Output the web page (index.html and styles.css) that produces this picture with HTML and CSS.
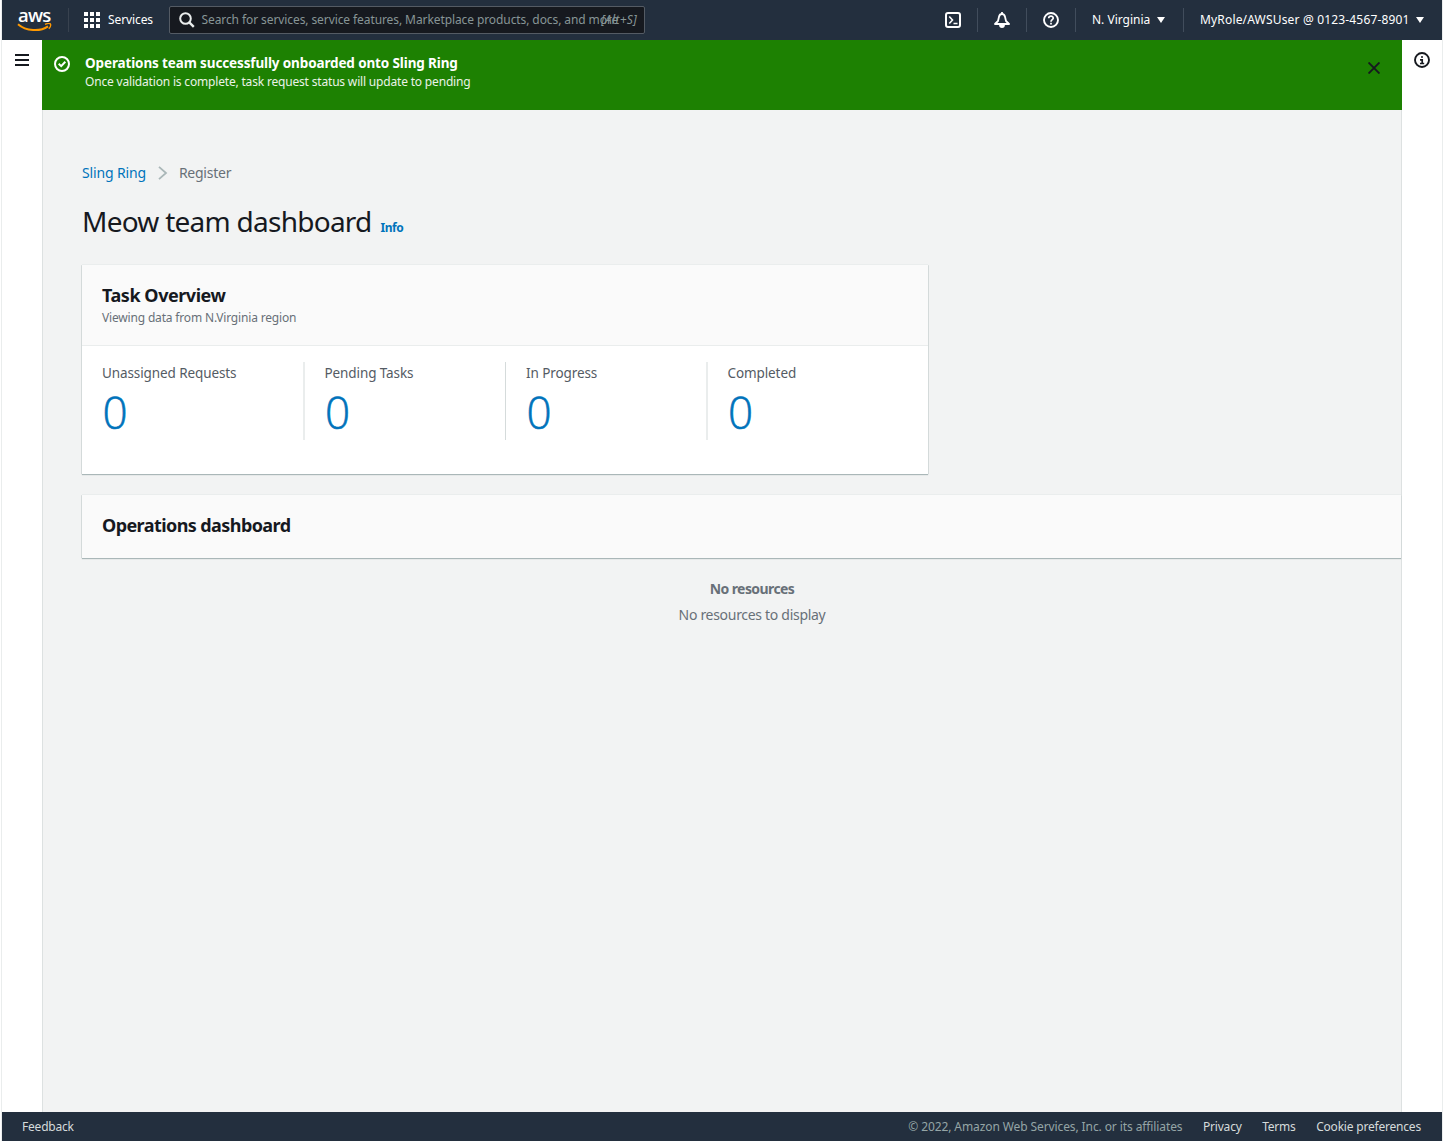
FILE: index.html
```html
<!DOCTYPE html>
<html lang="en">
<head>
    <meta charset="UTF-8">
    <meta name="viewport" content="width=device-width, initial-scale=1.0">
    <title>Meow team dashboard</title>
    <link rel="stylesheet" href="styles.css">
</head>
<body>
    <div class="app">
        <!-- Top navigation -->
        <nav class="topnav">
            <a class="logo" href="#">
                <span class="logo-text">aws</span>
                <svg class="logo-smile" width="36" height="10" viewBox="0 0 36 10">
                    <path d="M1 1.200C9 8.200 23 9 31 3.400" fill="none" stroke="#f90" stroke-width="2"/>
                    <path d="M28 1.300C30.500 .4 33 .4 33.400 1C33.900 1.800 33.200 4.200 31.800 5.800" fill="none" stroke="#f90" stroke-width="1.400"/>
                </svg>
            </a>
            <div class="services">
                <svg width="16" height="16" viewBox="0 0 16 16" fill="#fff">
                    <path d="M0 0h4v4H0zM6 0h4v4H6zM12 0h4v4h-4zM0 6h4v4H0zM6 6h4v4H6zM12 6h4v4h-4zM0 12h4v4H0zM6 12h4v4H6zM12 12h4v4h-4z"/>
                </svg>
                <span>Services</span>
            </div>
            <div class="search">
                <svg width="16" height="16" viewBox="0 0 16 16" fill="none" stroke="#eaeded" stroke-width="2">
                    <circle cx="6.500" cy="6.500" r="5.300"/>
                    <path d="M10.300 10.300L14.800 14.800" stroke-width="2.400"/>
                </svg>
                <span class="search-text">Search for services, service features, Marketplace products, docs, and more</span>
                <span class="search-key">[Alt+S]</span>
            </div>
            <div class="nav-right">
                <div class="nav-icon">
                    <svg width="16" height="16" viewBox="0 0 16 16" fill="none" stroke="#fff" stroke-width="2">
                        <rect x="1" y="1" width="14" height="14" rx="2"/>
                        <path d="M4.300 4.500L7.500 8L4.300 11.500M8.500 11.500h4" stroke-width="1.600"/>
                    </svg>
                </div>
                <div class="nav-icon">
                    <svg width="16" height="16" viewBox="0 0 16 16" fill="none" stroke="#fff" stroke-width="1.800" stroke-linejoin="round">
                        <path d="M1 12L4 9L5 4.800C5.400 3 6.500 2 8 2S10.600 3 11 4.800L12 9l3 3z"/>
                        <path d="M6 13a2 2 0 0 0 4 0" fill="#fff"/>
                        <path d="M8 0v2"/>
                    </svg>
                </div>
                <div class="nav-icon">
                    <svg width="16" height="16" viewBox="0 0 16 16" fill="none" stroke="#fff" stroke-width="1.900">
                        <circle cx="8" cy="8" r="7"/>
                        <path d="M5.700 6.300C5.800 3.200 10.300 3.400 10.200 6.100C10.100 7.700 8 7.600 8 9.700M8 10.800v1.800" stroke-width="1.700"/>
                    </svg>
                </div>
                <div class="nav-region"><span>N. Virginia</span> <i class="caret"></i></div>
                <div class="nav-user"><span>MyRole/AWSUser @ 0123-4567-8901</span> <i class="caret"></i></div>
            </div>
        </nav>

        <div class="layout">
            <aside class="rail">
                <svg width="14" height="12" viewBox="0 0 14 12" fill="#16191f">
                    <path d="M0 0h14v2H0zM0 5h14v2H0zM0 10h14v2H0z"/>
                </svg>
            </aside>

            <main class="content">
                <!-- Success message -->
                <div class="flash">
                    <svg class="flash-icon" width="16" height="16" viewBox="0 0 16 16" fill="none" stroke="#fff" stroke-width="2">
                        <circle cx="8" cy="8" r="7"/>
                        <path d="M4.700 7.800L7.200 10.200L11.300 5.800"/>
                    </svg>
                    <div class="flash-body">
                        <div class="flash-title">Operations team successfully onboarded onto Sling Ring</div>
                        <div class="flash-text">Once validation is complete, task request status will update to pending</div>
                    </div>
                    <svg class="flash-close" width="12" height="12" viewBox="0 0 12 12" fill="none" stroke="#16191f" stroke-width="1.900">
                        <path d="M.5 .5L11.500 11.500M11.500 .5L.5 11.500"/>
                    </svg>
                </div>

                <div class="page">
                    <div class="breadcrumbs">
                        <a class="crumb-link" href="#">Sling Ring</a>
                        <svg width="10" height="14" viewBox="0 0 10 14" fill="none" stroke="#aab7b8" stroke-width="1.800">
                            <path d="M1 .8L8 7L1 13.200"/>
                        </svg>
                        <span class="crumb-current">Register</span>
                    </div>

                    <div class="page-header">
                        <h1>Meow team dashboard</h1>
                        <a class="info" href="#">Info</a>
                    </div>

                    <!-- Task overview -->
                    <section class="card overview">
                        <div class="card-header">
                            <h2 class="overview-title">Task Overview</h2>
                            <p>Viewing data from N.Virginia region</p>
                        </div>
                        <div class="stats">
                            <div class="stat">
                                <div class="stat-label">Unassigned Requests</div>
                                <a class="stat-value" href="#">0</a>
                            </div>
                            <div class="stat">
                                <div class="stat-label">Pending Tasks</div>
                                <a class="stat-value" href="#">0</a>
                            </div>
                            <div class="stat">
                                <div class="stat-label">In Progress</div>
                                <a class="stat-value" href="#">0</a>
                            </div>
                            <div class="stat">
                                <div class="stat-label">Completed</div>
                                <a class="stat-value" href="#">0</a>
                            </div>
                        </div>
                    </section>

                    <!-- Operations dashboard -->
                    <section class="card operations">
                        <h2>Operations dashboard</h2>
                    </section>
                    <div class="empty">
                        <b>No resources</b>
                        <span>No resources to display</span>
                    </div>
                </div>
            </main>

            <aside class="rail rail-right">
                <svg width="16" height="16" viewBox="0 0 16 16" fill="none" stroke="#16191f" stroke-width="1.900">
                    <circle cx="8" cy="8" r="7"/>
                    <path d="M7 5h2M6 7.800h2.200v3.200M6 11.500h4.200" stroke-width="1.700"/>
                </svg>
            </aside>
        </div>

        <footer>
            <a class="feedback" href="#">Feedback</a>
            <span class="copyright">© 2022, Amazon Web Services, Inc. or its affiliates</span>
            <a href="#">Privacy</a>
            <a href="#">Terms</a>
            <a href="#">Cookie preferences</a>
        </footer>
    </div>
</body>
</html>
```
FILE: styles.css
```css
* {
    box-sizing: border-box;
}

body {
    margin: 0;
    padding: 0 1px;
    background: white;
    font-family: "Noto Sans", "Open Sans", sans-serif;
    font-size: 13px;
    color: #16191f;
}

a {
    text-decoration: none;
    color: #0073bb;
}

h1, h2, p {
    margin: 0;
}

svg {
    display: block;
    flex: none;
}

.app {
    display: flex;
    flex-direction: column;
    height: 1141px;
    padding: 0 1px;
    overflow: hidden;
    white-space: nowrap;
    box-shadow: inset 1px 0 #eaeded, inset -1px 0 #eaeded;
}

/* Top navigation */
.topnav {
    display: flex;
    align-items: center;
    height: 40px;
    flex: none;
    background: #232f3e;
    color: white;
    font-size: 12px;
}

.topnav span {
    padding-bottom: 1px;
}

.logo {
    width: 67px;
    height: 24px;
    padding-left: 15px;
    border-right: 1px solid #38424f;
    color: white;
}

.logo-text {
    display: block;
    height: 14px;
    margin-left: 1px;
    line-height: 13px;
    font-family: "Open Sans", sans-serif;
    font-size: 18.500px;
    font-weight: 600;
    letter-spacing: -0.8px;
}

.logo-smile {
    margin-top: 1px;
}

.services {
    display: flex;
    align-items: center;
    width: 100px;
    padding-left: 15px;
    gap: 8px;
    letter-spacing: -0.1px;
}

.search {
    display: flex;
    align-items: center;
    position: relative;
    width: 476px;
    height: 28px;
    padding-left: 9px;
    gap: 6.500px;
    background: #16191f;
    border: 1px solid #545b64;
    border-radius: 2px;
    color: #879596;
}

.search-text {
    letter-spacing: -0.09px;
}

.search-key {
    position: absolute;
    right: 7px;
    font-style: italic;
    letter-spacing: 0.3px;
}

.nav-right {
    display: flex;
    align-items: center;
    margin-left: auto;
}

.nav-icon {
    display: flex;
    align-items: center;
    width: 49px;
    height: 24px;
    padding-left: 16px;
    border-right: 1px solid #414d5c;
}

.nav-region,
.nav-user {
    display: flex;
    align-items: center;
    justify-content: space-between;
    height: 24px;
}

.nav-region {
    width: 108px;
    padding: 0 18px 0 16px;
    border-right: 1px solid #414d5c;
}

.nav-user {
    width: 258px;
    padding: 0 18px 0 16px;
    letter-spacing: 0.17px;
}

.caret {
    border: 4px solid transparent;
    border-top: 6px solid white;
    border-bottom: 0;
}

/* Page layout */
.layout {
    display: flex;
    flex: 1;
    min-height: 0;
}

.rail {
    width: 40px;
    flex: none;
    padding: 14px 0 0 13px;
}

.rail-right {
    padding: 12px 0 0 12px;
}

.content {
    flex: 1;
    min-width: 0;
    overflow: hidden;
    background: #f2f3f3;
    box-shadow: inset 1px 0 #dde1e1, inset -1px 0 #dde1e1;
}

.flash {
    display: flex;
    height: 70px;
    padding: 16px 22px 0 12px;
    background: #1d8102;
    color: white;
}

.flash-body {
    margin: -2px auto 0 15px;
}

.flash-title {
    font-size: 13.500px;
    font-weight: bold;
    line-height: 18px;
    letter-spacing: -0.13px;
}

.flash-text {
    font-size: 12px;
    line-height: 20px;
    letter-spacing: -0.18px;
    color: #eaf3e8;
}

.flash-close {
    margin-top: 6px;
}

.page {
    padding: 52px 0 0 40px;
}

.breadcrumbs {
    display: flex;
    align-items: center;
    height: 22px;
    gap: 12px;
    font-size: 14px;
    line-height: 20px;
}

.crumb-link,
.crumb-current {
    letter-spacing: -0.15px;
}

.crumb-current {
    margin-left: -1px;
    letter-spacing: -0.25px;
    color: #687078;
}

.page-header {
    display: flex;
    align-items: baseline;
    height: 36px;
    margin-top: 19px;
    gap: 9px;
}

h1 {
    font-size: 28px;
    font-weight: 400;
    line-height: 36px;
    letter-spacing: -0.74px;
}

.info {
    font-size: 12px;
    font-weight: bold;
    letter-spacing: -0.5px;
}

.card {
    background: white;
    box-shadow: 0 1px 1px #aab7b8, 0 -1px #eaeded, -1px 0 #dde1e1, 1px 0 #dde1e1;
}

.overview {
    width: 846px;
    height: 209px;
    margin-top: 26px;
}

.card-header {
    height: 81px;
    padding: 17px 20px 0;
    background: #fafafa;
    border-bottom: 1px solid #eaeded;
}

h2 {
    font-size: 18px;
    font-weight: bold;
    line-height: 26px;
    letter-spacing: -0.58px;
}

.overview-title {
    letter-spacing: -0.45px;
}

.card-header p {
    font-size: 12px;
    line-height: 20px;
    letter-spacing: -0.17px;
    color: #687078;
}

.stats {
    display: flex;
    padding: 16px 0 0 20px;
}

.stat {
    width: 201.500px;
    height: 78px;
    padding-left: 19.500px;
    border-left: 2px solid #eaeded;
}

.stat:first-child {
    width: 201px;
    padding-left: 0;
    border-left: 0;
}

.stat:nth-child(3) {
    padding-left: 20.500px;
    border-left: 1px solid #d5dbdb;
}

.stat-label {
    line-height: 22px;
    font-size: 13.500px;
    letter-spacing: -0.1px;
    color: #545b64;
}

.stat-value {
    display: block;
    padding-left: 0.500px;
    font-family: "Open Sans", sans-serif;
    font-size: 44px;
    font-weight: 300;
    line-height: 56px;
    -webkit-text-stroke: 0.6px #0073bb;
}

.operations {
    height: 63px;
    margin: 21px 1px 0 0;
    padding: 17px 20px;
    background: #fafafa;
}

.empty {
    display: flex;
    flex-direction: column;
    align-items: center;
    width: 1340px;
    padding-top: 18px;
    font-size: 14px;
    line-height: 26px;
    letter-spacing: -0.3px;
    color: #687078;
}

.empty b {
    letter-spacing: -0.58px;
}

footer {
    display: flex;
    align-items: center;
    height: 29px;
    flex: none;
    padding: 0 21px 0 20px;
    gap: 20.500px;
    background: #232f3e;
    font-size: 12px;
    letter-spacing: -0.2px;
}

footer a {
    color: #d5dbdb;
}

.copyright {
    margin-left: auto;
    letter-spacing: -0.1px;
    color: #95a5a6;
}
```
